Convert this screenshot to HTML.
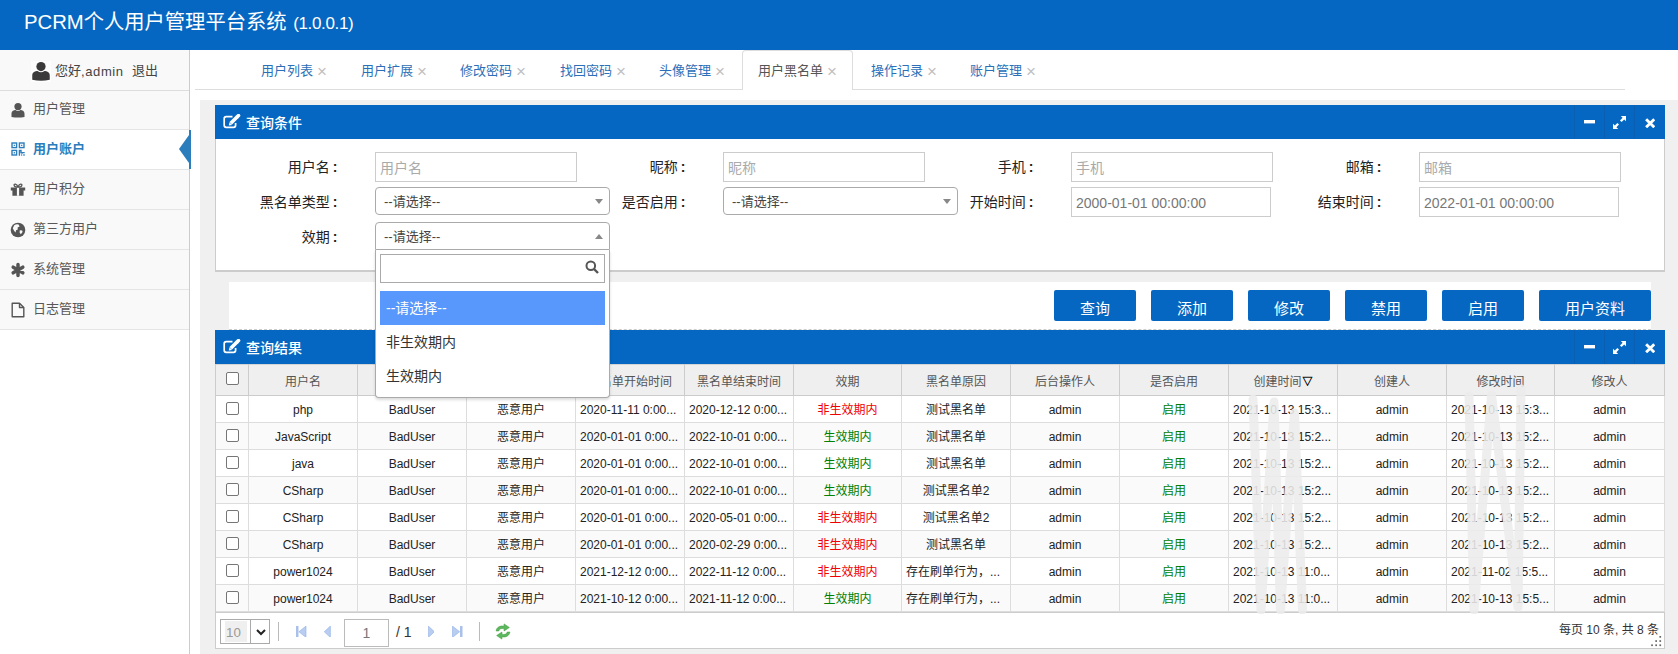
<!DOCTYPE html>
<html lang="zh-CN">
<head>
<meta charset="utf-8">
<title>PCRM个人用户管理平台系统</title>
<style>
*{box-sizing:border-box;margin:0;padding:0}
html,body{width:1678px;height:654px;overflow:hidden;background:#fff}
body{font-family:"Liberation Sans","Noto Sans CJK SC",sans-serif;font-size:13px;color:#333;position:relative}
.abs{position:absolute}
#hdr{position:absolute;left:0;top:0;width:1678px;height:50px;background:#0567c1}
#hdr .t{position:absolute;left:24px;top:7px;font-size:20.3px;color:#fff;line-height:30px;white-space:nowrap}
#side{position:absolute;left:0;top:50px;width:190px;height:604px;border-right:1px solid #ccc;background:#fff}
#side .user{height:40px;background:#f9f9f9;position:relative;font-size:13px;color:#444;line-height:40px}
#side .user span{position:absolute;top:1px;white-space:nowrap}
#side .mi{height:40px;background:#f9f9f9;border-bottom:1px solid #e5e5e5;position:relative;font-size:13px;color:#585858;line-height:38px;padding-left:33px}
#side .mi.on{background:#fff;color:#2b7dbc;font-weight:bold}
#side .mi svg{position:absolute;left:10px;top:12px}
#side .arrow{position:absolute;left:179px;top:84.500px;width:0;height:0;border-top:14px solid transparent;border-bottom:14px solid transparent;border-right:10px solid #2b7dbc}
#side .bar{position:absolute;left:189px;top:80px;width:2px;height:39px;background:#2b7dbc}
#tabs{position:absolute;left:190px;top:50px;width:1488px;height:50px;background:#fff}
#tabs .line{position:absolute;left:5px;top:39px;width:1430px;height:1px;background:#ddd}
#tabs .tb{position:absolute;top:0;height:40px;line-height:39px;font-size:13px;color:#2b6fb8;white-space:nowrap}
#tabs .tb i{font-style:normal;color:#c0c0c0;font-size:17px;margin-left:4px;position:relative;top:2px}
#tabs .act{position:absolute;left:552px;top:0;width:111px;height:40px;border:1px solid #ddd;border-bottom:0;border-radius:4px 4px 0 0;background:#fff}
#main{position:absolute;left:200px;top:100px;width:1478px;height:554px;background:#f0f0f0}
.ph{position:absolute;left:215px;width:1450px;height:34px;background:#0567c1;color:#fff;font-size:13px;line-height:34px}
.ph .tt{position:absolute;left:31px;top:1px;font-size:14px;font-weight:500;white-space:nowrap}
.ph .ic{position:absolute;top:0;width:30px;height:34px;border-left:1px solid #0a5fb2}
.ph svg{position:absolute}
#p1b{position:absolute;left:215px;top:139px;width:1450px;height:133px;background:#fff;border:1px solid #ccc;border-top:0;border-bottom:2px solid #ccc}
.lb{position:absolute;width:130px;text-align:right;font-size:14px;color:#222;line-height:20px;white-space:nowrap}
.in{position:absolute;height:30px;border:1px solid #ccc;background:#fff;font-size:14px;line-height:30px;padding-left:4px;color:#aaa;white-space:nowrap}
.in.v{color:#777}
.sel{position:absolute;height:28px;border:1px solid #aaa;border-radius:4px;background:#fff;font-size:13px;line-height:27px;padding-left:8px;color:#444;white-space:nowrap}
.sel b{position:absolute;right:6px;top:11px;width:0;height:0;border-left:4px solid transparent;border-right:4px solid transparent;border-top:5px solid #888}
.sel b.up{border-top:0;border-bottom:5px solid #888}
#dd{position:absolute;left:375px;top:250px;width:235px;height:148px;background:#fff;border:1px solid #aaa;border-top:0;border-radius:0 0 4px 4px;box-shadow:0 2px 3px rgba(0,0,0,.14)}
#dd .s{position:absolute;left:4px;top:4px;width:225px;height:29px;border:1px solid #aaa;background:#fff}
#dd .o{position:absolute;left:4px;width:225px;height:34px;line-height:35px;padding-left:6px;font-size:14px;color:#333;white-space:nowrap}
#dd .o.h{background:#5897fb;color:#fff}
#bb{position:absolute;left:229px;top:282px;width:1422px;height:48px;background:#fff;border-bottom:1px dashed #ccc}
.btn{position:absolute;top:290px;height:31px;background:#0567c1;color:#fff;font-size:15px;text-align:center;line-height:38px;white-space:nowrap;border-radius:2px}
#p2b{position:absolute;left:215px;top:364px;width:1450px;height:285px;background:#fff;border:1px solid #ccc;border-top:0}
#th{position:absolute;left:215px;top:364px;width:1450px;height:32px;background:#efefef;border-bottom:1px solid #ccc;border-left:1px solid #ccc;box-shadow:inset 0 1px 0 #d4d4d4}
.c{position:absolute;top:0;height:100%;border-right:1px solid #ddd;text-align:center;font-size:12px;white-space:nowrap;overflow:hidden}
#th .c{line-height:36px;color:#555;border-right:1px solid #ccc}
.r{position:absolute;left:216px;width:1449px;height:27px;border-bottom:1px solid #ddd;background:#fff}
.r.e{background:#fafafa}
.r .c{line-height:29px;color:#222}
.r .c.l{text-align:left;padding-left:4px}
.g{color:#008000!important}.rd{color:#f00000!important}
.cb{position:absolute;left:10px;width:13px;height:13px;border:1px solid #767676;border-radius:2px;background:#fff}
#pg{position:absolute;left:216px;top:612px;width:1448px;height:36px;background:#fff;border-top:1px solid #ccc}
.psel{position:absolute;left:4px;top:6px;width:50px;height:25px;border:1px solid #aaa;background:#fff}
.psel .n{position:absolute;left:4px;top:1px;width:22px;height:21px;background:#efefef;color:#999;font-size:13.300px;line-height:23px;padding-left:1px}
.psel .a{position:absolute;left:29px;top:0;width:20px;height:23px;border-left:1px solid #aaa}
.psel .a svg{position:absolute;left:4.500px;top:8.500px}
.sep{position:absolute;top:9px;width:1px;height:19px;background:#bbb}
.pin{position:absolute;left:128px;top:6px;width:45px;height:28px;border:1px solid #bbb;background:#fff;text-align:center;font-size:14px;line-height:26px;color:#777}
</style>
</head>
<body>
<div id="hdr"><div class="t">PCRM个人用户管理平台系统 <span style="font-size:17px;letter-spacing:-.35px;margin-left:1px">(1.0.0.1)</span></div></div>
<div id="side">
<div class="user"><div class="abs" style="left:31px;top:11px;width:20px;height:21px;background:#fdfdfd"></div><svg class="abs" style="left:31px;top:11px" width="20" height="20" viewBox="0 0 16 16"><circle cx="8" cy="4.4" r="3.7" fill="#3a3a3a"/><path d="M1 15 V11.5 C1 9 3.6 8 5.2 8 Q8 10 10.8 8 C12.4 8 15 9 15 11.5 V15 Q8 16.4 1 15Z" fill="#3a3a3a"/></svg><span style="left:55px">您好<span style="letter-spacing:.6px">,admin</span></span><span style="left:132px">退出</span></div>
<div class="mi"><svg width="16" height="16" viewBox="0 0 16 16"><circle cx="8" cy="4.6" r="3.6" fill="#555"/><path d="M1.5 15 V11.5 C1.5 9 4 8 5.5 8 Q8 9.8 10.5 8 C12 8 14.5 9 14.5 11.5 V15 Q8 16 1.5 15Z" fill="#555"/></svg>用户管理</div>
<div class="mi on"><svg width="16" height="16" viewBox="0 0 16 16" fill="none" stroke="#2b7dbc" stroke-width="1.400"><rect x="2" y="1" width="4.600" height="4.600"/><rect x="9.400" y="1" width="4.600" height="4.600"/><rect x="2" y="8.400" width="4.600" height="4.600"/><path d="M8.700 8.400h2.300v2.200h3.700M9.400 8.400v5.300M11.200 13h1M13.300 13h1.400M12 10.600v1.200" /><path d="M3.700 3.300h1.200M11.100 3.300h1.200M4.300 10v1.400" stroke-width="1.200"/></svg>用户账户</div>
<div class="mi"><svg width="16" height="16" viewBox="0 0 16 16" fill="#555"><path d="M.8 5.400h14.400v3.200H.8zM2.400 8.600h11.200v5.200H2.400z"/><path d="M8 5.200C6.800 1.200 3.400 1.600 4.200 3.600 4.600 4.800 6.500 5.200 8 5.200 9.500 5.200 11.400 4.800 11.800 3.600 12.600 1.600 9.200 1.200 8 5.200Z" fill="none" stroke="#555" stroke-width="1.300"/><rect x="6.900" y="5.800" width="2.200" height="8" fill="#f9f9f9"/></svg>用户积分</div>
<div class="mi"><svg width="16" height="16" viewBox="0 0 16 16"><circle cx="8" cy="8" r="7.300" fill="#555"/><path d="M4.200 3.200Q6.500 1.800 8.600 2.600L9.600 4.600 7.600 5.400 7.800 7.400 6 8.200 5.600 10.400 4.200 9 2.800 6.200Z M9.800 8.200L12.200 8.400 12.600 10 10.800 12.200 9.600 10.400Z" fill="#f9f9f9"/></svg>第三方用户</div>
<div class="mi"><svg width="16" height="16" viewBox="0 0 16 16" stroke="#555" stroke-width="3.500" stroke-linecap="round"><path d="M8 2.400v11.200M3.200 5.200l9.600 5.600M12.800 5.200L3.200 10.800"/></svg>系统管理</div>
<div class="mi"><svg width="16" height="16" viewBox="0 0 16 16" fill="none" stroke="#555" stroke-width="1.4" stroke-linejoin="round"><path d="M2.2 1.2h7.3l4.3 4.3v9.3H2.2z"/><path d="M9.5 1.2v4.3h4.3"/></svg>日志管理</div>
<div class="abs" style="left:0;top:40px;width:189px;height:1px;background:#ddd"></div><div class="bar"></div><div class="arrow"></div>
</div>
<div id="tabs"><div class="line"></div><div class="act"></div>
<div class="tb" style="left:71px;">用户列表<i>×</i></div>
<div class="tb" style="left:171px;">用户扩展<i>×</i></div>
<div class="tb" style="left:270px;">修改密码<i>×</i></div>
<div class="tb" style="left:370px;">找回密码<i>×</i></div>
<div class="tb" style="left:469px;">头像管理<i>×</i></div>
<div class="tb" style="left:568px;color:#555;">用户黑名单<i>×</i></div>
<div class="tb" style="left:681px;">操作记录<i>×</i></div>
<div class="tb" style="left:780px;">账户管理<i>×</i></div>
</div>
<div id="main"></div>
<div class="ph" style="top:105px"><svg style="left:8px;top:9px" width="18" height="15" viewBox="0 0 18 15" fill="none" stroke="#fff"><path d="M12.600 9v2.300a2 2 0 0 1-2 2H3.200a2 2 0 0 1-2-2V4.700a2 2 0 0 1 2-2h6.300" stroke-width="1.700"/><path d="M7.800 9.300L14.300 2.800" stroke-width="3.600"/><path d="M5.800 11.600l.7-3.300 2.600 2.600z" fill="#fff" stroke="none"/><path d="M14.300 2.800l1.200-1.200" stroke-width="3.600" stroke-linecap="round"/></svg><div class="tt">查询条件</div><div class="ic" style="left:1359px"><svg style="left:9px;top:15px" width="11" height="4"><rect width="11" height="3.4" fill="#fff"/></svg></div><div class="ic" style="left:1389px"><svg style="left:8px;top:11px" width="13" height="13" viewBox="0 0 13 13" fill="#fff"><path d="M13 0v5.2L11.2 3.4 8.6 6 7 4.4 9.6 1.8 7.8 0zM0 13V7.8l1.8 1.8L4.4 7 6 8.600 3.4 11.2 5.2 13z"/></svg></div><div class="ic" style="left:1419px"><svg style="left:9.500px;top:12.500px" width="10.400" height="10.400" viewBox="0 0 11 11" stroke="#fff" stroke-width="3"><path d="M1.2 1.2l8.6 8.6M9.800 1.2L1.2 9.800"/></svg></div></div>
<div id="p1b"></div>
<div class="lb" style="left:207.5px;top:157px">用户名<span style="margin-left:3px;font-weight:bold">:</span></div>
<div class="lb" style="left:555.5px;top:157px">昵称<span style="margin-left:3px;font-weight:bold">:</span></div>
<div class="lb" style="left:903.5px;top:157px">手机<span style="margin-left:3px;font-weight:bold">:</span></div>
<div class="lb" style="left:1251.5px;top:157px">邮箱<span style="margin-left:3px;font-weight:bold">:</span></div>
<div class="lb" style="left:207.5px;top:192px">黑名单类型<span style="margin-left:3px;font-weight:bold">:</span></div>
<div class="lb" style="left:555.5px;top:192px">是否启用<span style="margin-left:3px;font-weight:bold">:</span></div>
<div class="lb" style="left:903.5px;top:192px">开始时间<span style="margin-left:3px;font-weight:bold">:</span></div>
<div class="lb" style="left:1251.5px;top:192px">结束时间<span style="margin-left:3px;font-weight:bold">:</span></div>
<div class="lb" style="left:207.5px;top:227px">效期<span style="margin-left:3px;font-weight:bold">:</span></div>
<div class="in" style="left:375px;top:152px;width:202px">用户名</div>
<div class="in" style="left:723px;top:152px;width:202px">昵称</div>
<div class="in" style="left:1071px;top:152px;width:202px">手机</div>
<div class="in" style="left:1419px;top:152px;width:202px">邮箱</div>
<div class="sel" style="left:375px;top:187px;width:235px">--请选择--<b></b></div>
<div class="sel" style="left:723px;top:187px;width:235px">--请选择--<b></b></div>
<div class="in v" style="left:1071px;top:187px;width:200px">2000-01-01 00:00:00</div>
<div class="in v" style="left:1419px;top:187px;width:200px">2022-01-01 00:00:00</div>
<div class="sel" style="left:375px;top:222px;width:235px;border-radius:4px 4px 0 0">--请选择--<b class="up"></b></div>
<div id="bb"></div>
<div class="btn" style="left:1054px;width:82px">查询</div>
<div class="btn" style="left:1151px;width:82px">添加</div>
<div class="btn" style="left:1248px;width:82px">修改</div>
<div class="btn" style="left:1345px;width:82px">禁用</div>
<div class="btn" style="left:1442px;width:82px">启用</div>
<div class="btn" style="left:1539px;width:112px">用户资料</div>
<div class="ph" style="top:330px"><svg style="left:8px;top:9px" width="18" height="15" viewBox="0 0 18 15" fill="none" stroke="#fff"><path d="M12.600 9v2.300a2 2 0 0 1-2 2H3.200a2 2 0 0 1-2-2V4.700a2 2 0 0 1 2-2h6.300" stroke-width="1.700"/><path d="M7.800 9.300L14.300 2.800" stroke-width="3.600"/><path d="M5.800 11.600l.7-3.300 2.600 2.600z" fill="#fff" stroke="none"/><path d="M14.300 2.800l1.200-1.200" stroke-width="3.600" stroke-linecap="round"/></svg><div class="tt">查询结果</div><div class="ic" style="left:1359px"><svg style="left:9px;top:15px" width="11" height="4"><rect width="11" height="3.4" fill="#fff"/></svg></div><div class="ic" style="left:1389px"><svg style="left:8px;top:11px" width="13" height="13" viewBox="0 0 13 13" fill="#fff"><path d="M13 0v5.2L11.2 3.4 8.6 6 7 4.4 9.6 1.8 7.8 0zM0 13V7.8l1.8 1.8L4.4 7 6 8.600 3.4 11.2 5.2 13z"/></svg></div><div class="ic" style="left:1419px"><svg style="left:9.500px;top:12.500px" width="10.400" height="10.400" viewBox="0 0 11 11" stroke="#fff" stroke-width="3"><path d="M1.2 1.2l8.6 8.6M9.800 1.2L1.2 9.800"/></svg></div></div>
<div id="p2b"></div>
<div id="th"><div class="c" style="left:0px;width:33px"><span class="cb" style="top:8px"></span></div><div class="c" style="left:33px;width:109px">用户名</div><div class="c" style="left:142px;width:109px">黑名单类型</div><div class="c" style="left:251px;width:109px">类型名称</div><div class="c" style="left:360px;width:109px">黑名单开始时间</div><div class="c" style="left:469px;width:109px">黑名单结束时间</div><div class="c" style="left:578px;width:108px">效期</div><div class="c" style="left:686px;width:109px">黑名单原因</div><div class="c" style="left:795px;width:109px">后台操作人</div><div class="c" style="left:904px;width:109px">是否启用</div><div class="c" style="left:1013px;width:109px">创建时间<span style="font-size:10px;color:#111;-webkit-text-stroke:.4px #111;position:relative;top:-1px;margin-left:1px">▽</span></div><div class="c" style="left:1122px;width:109px">创建人</div><div class="c" style="left:1231px;width:108px">修改时间</div><div class="c" style="left:1339px;width:110px">修改人</div></div>
<div class="r" style="top:396px"><div class="c" style="left:0px;width:33px"><span class="cb" style="top:6px"></span></div><div class="c" style="left:33px;width:109px">php</div><div class="c" style="left:142px;width:109px">BadUser</div><div class="c" style="left:251px;width:109px">恶意用户</div><div class="c l" style="left:360px;width:109px">2020-11-11 0:00...</div><div class="c l" style="left:469px;width:109px">2020-12-12 0:00...</div><div class="c rd" style="left:578px;width:108px">非生效期内</div><div class="c" style="left:686px;width:109px">测试黑名单</div><div class="c" style="left:795px;width:109px">admin</div><div class="c g" style="left:904px;width:109px">启用</div><div class="c l" style="left:1013px;width:109px">2021-10-13 15:3...</div><div class="c" style="left:1122px;width:109px">admin</div><div class="c l" style="left:1231px;width:108px">2021-10-13 15:3...</div><div class="c" style="left:1339px;width:110px">admin</div></div>
<div class="r e" style="top:423px"><div class="c" style="left:0px;width:33px"><span class="cb" style="top:6px"></span></div><div class="c" style="left:33px;width:109px">JavaScript</div><div class="c" style="left:142px;width:109px">BadUser</div><div class="c" style="left:251px;width:109px">恶意用户</div><div class="c l" style="left:360px;width:109px">2020-01-01 0:00...</div><div class="c l" style="left:469px;width:109px">2022-10-01 0:00...</div><div class="c g" style="left:578px;width:108px">生效期内</div><div class="c" style="left:686px;width:109px">测试黑名单</div><div class="c" style="left:795px;width:109px">admin</div><div class="c g" style="left:904px;width:109px">启用</div><div class="c l" style="left:1013px;width:109px">2021-10-13 15:2...</div><div class="c" style="left:1122px;width:109px">admin</div><div class="c l" style="left:1231px;width:108px">2021-10-13 15:2...</div><div class="c" style="left:1339px;width:110px">admin</div></div>
<div class="r" style="top:450px"><div class="c" style="left:0px;width:33px"><span class="cb" style="top:6px"></span></div><div class="c" style="left:33px;width:109px">java</div><div class="c" style="left:142px;width:109px">BadUser</div><div class="c" style="left:251px;width:109px">恶意用户</div><div class="c l" style="left:360px;width:109px">2020-01-01 0:00...</div><div class="c l" style="left:469px;width:109px">2022-10-01 0:00...</div><div class="c g" style="left:578px;width:108px">生效期内</div><div class="c" style="left:686px;width:109px">测试黑名单</div><div class="c" style="left:795px;width:109px">admin</div><div class="c g" style="left:904px;width:109px">启用</div><div class="c l" style="left:1013px;width:109px">2021-10-13 15:2...</div><div class="c" style="left:1122px;width:109px">admin</div><div class="c l" style="left:1231px;width:108px">2021-10-13 15:2...</div><div class="c" style="left:1339px;width:110px">admin</div></div>
<div class="r e" style="top:477px"><div class="c" style="left:0px;width:33px"><span class="cb" style="top:6px"></span></div><div class="c" style="left:33px;width:109px">CSharp</div><div class="c" style="left:142px;width:109px">BadUser</div><div class="c" style="left:251px;width:109px">恶意用户</div><div class="c l" style="left:360px;width:109px">2020-01-01 0:00...</div><div class="c l" style="left:469px;width:109px">2022-10-01 0:00...</div><div class="c g" style="left:578px;width:108px">生效期内</div><div class="c" style="left:686px;width:109px">测试黑名单2</div><div class="c" style="left:795px;width:109px">admin</div><div class="c g" style="left:904px;width:109px">启用</div><div class="c l" style="left:1013px;width:109px">2021-10-13 15:2...</div><div class="c" style="left:1122px;width:109px">admin</div><div class="c l" style="left:1231px;width:108px">2021-10-13 15:2...</div><div class="c" style="left:1339px;width:110px">admin</div></div>
<div class="r" style="top:504px"><div class="c" style="left:0px;width:33px"><span class="cb" style="top:6px"></span></div><div class="c" style="left:33px;width:109px">CSharp</div><div class="c" style="left:142px;width:109px">BadUser</div><div class="c" style="left:251px;width:109px">恶意用户</div><div class="c l" style="left:360px;width:109px">2020-01-01 0:00...</div><div class="c l" style="left:469px;width:109px">2020-05-01 0:00...</div><div class="c rd" style="left:578px;width:108px">非生效期内</div><div class="c" style="left:686px;width:109px">测试黑名单2</div><div class="c" style="left:795px;width:109px">admin</div><div class="c g" style="left:904px;width:109px">启用</div><div class="c l" style="left:1013px;width:109px">2021-10-13 15:2...</div><div class="c" style="left:1122px;width:109px">admin</div><div class="c l" style="left:1231px;width:108px">2021-10-13 15:2...</div><div class="c" style="left:1339px;width:110px">admin</div></div>
<div class="r e" style="top:531px"><div class="c" style="left:0px;width:33px"><span class="cb" style="top:6px"></span></div><div class="c" style="left:33px;width:109px">CSharp</div><div class="c" style="left:142px;width:109px">BadUser</div><div class="c" style="left:251px;width:109px">恶意用户</div><div class="c l" style="left:360px;width:109px">2020-01-01 0:00...</div><div class="c l" style="left:469px;width:109px">2020-02-29 0:00...</div><div class="c rd" style="left:578px;width:108px">非生效期内</div><div class="c" style="left:686px;width:109px">测试黑名单</div><div class="c" style="left:795px;width:109px">admin</div><div class="c g" style="left:904px;width:109px">启用</div><div class="c l" style="left:1013px;width:109px">2021-10-13 15:2...</div><div class="c" style="left:1122px;width:109px">admin</div><div class="c l" style="left:1231px;width:108px">2021-10-13 15:2...</div><div class="c" style="left:1339px;width:110px">admin</div></div>
<div class="r" style="top:558px"><div class="c" style="left:0px;width:33px"><span class="cb" style="top:6px"></span></div><div class="c" style="left:33px;width:109px">power1024</div><div class="c" style="left:142px;width:109px">BadUser</div><div class="c" style="left:251px;width:109px">恶意用户</div><div class="c l" style="left:360px;width:109px">2021-12-12 0:00...</div><div class="c l" style="left:469px;width:109px">2022-11-12 0:00...</div><div class="c rd" style="left:578px;width:108px">非生效期内</div><div class="c l" style="left:686px;width:109px">存在刷单行为，...</div><div class="c" style="left:795px;width:109px">admin</div><div class="c g" style="left:904px;width:109px">启用</div><div class="c l" style="left:1013px;width:109px">2021-10-13 11:0...</div><div class="c" style="left:1122px;width:109px">admin</div><div class="c l" style="left:1231px;width:108px">2021-11-02 15:5...</div><div class="c" style="left:1339px;width:110px">admin</div></div>
<div class="r e" style="top:585px"><div class="c" style="left:0px;width:33px"><span class="cb" style="top:6px"></span></div><div class="c" style="left:33px;width:109px">power1024</div><div class="c" style="left:142px;width:109px">BadUser</div><div class="c" style="left:251px;width:109px">恶意用户</div><div class="c l" style="left:360px;width:109px">2021-10-12 0:00...</div><div class="c l" style="left:469px;width:109px">2021-11-12 0:00...</div><div class="c g" style="left:578px;width:108px">生效期内</div><div class="c l" style="left:686px;width:109px">存在刷单行为，...</div><div class="c" style="left:795px;width:109px">admin</div><div class="c g" style="left:904px;width:109px">启用</div><div class="c l" style="left:1013px;width:109px">2021-10-13 11:0...</div><div class="c" style="left:1122px;width:109px">admin</div><div class="c l" style="left:1231px;width:108px">2021-10-13 15:5...</div><div class="c" style="left:1339px;width:110px">admin</div></div>
<div id="pg"><div class="psel"><span class="n">10</span><span class="a"><svg width="10" height="7" viewBox="0 0 10 7" fill="none" stroke="#222" stroke-width="2"><path d="M1 1l4 4 4-4"/></svg></span></div><div class="sep" style="left:62px"></div><svg class="abs" style="left:80px;top:12.500px" width="10.500" height="11.500" viewBox="0 0 11 12"><rect x="0" y="0" width="2.600" height="12" fill="#a9c0ea"/><path d="M10.500 0v12L3 6z" fill="#b9cdf0" stroke="#8eaee6" stroke-width=".6"/></svg><svg class="abs" style="left:108px;top:12.500px" width="6.700" height="11.500" viewBox="0 0 7 12"><path d="M6.700 0v12L.3 6z" fill="#b9cdf0" stroke="#8eaee6" stroke-width=".6"/></svg><div class="pin">1</div><div class="abs" style="left:180px;top:9px;font-size:14px;color:#333;line-height:20px">/ 1</div><svg class="abs" style="left:211.500px;top:12.500px" width="6.700" height="11.500" viewBox="0 0 7 12"><path d="M.3 0v12L6.700 6z" fill="#b9cdf0" stroke="#8eaee6" stroke-width=".6"/></svg><svg class="abs" style="left:236px;top:12.500px" width="10.500" height="11.500" viewBox="0 0 11 12"><rect x="8.400" y="0" width="2.600" height="12" fill="#a9c0ea"/><path d="M.5 0v12L8 6z" fill="#b9cdf0" stroke="#8eaee6" stroke-width=".6"/></svg><div class="sep" style="left:263px"></div><svg class="abs" style="left:277.500px;top:10px" width="18" height="17" viewBox="0 0 17 16" fill="#5cb85c" stroke="#3d9a3d" stroke-width=".5"><path d="M2 7.500C2.500 3.800 6 2.200 9.500 3V.8L14.500 4.200 9.500 7.500V5.400C7 4.800 5 5.500 4.500 7.500z"/><path d="M15 8.500C14.500 12.200 11 13.800 7.500 13v2.200L2.500 11.800 7.500 8.500v2.100c2.500.6 4.500-.1 5-2.100z"/></svg><div class="abs" style="right:5px;top:7px;font-size:12px;color:#333;line-height:20px;white-space:nowrap">每页 10 条, 共 8 条</div><svg class="abs" style="left:1435px;top:23px" width="11" height="11" viewBox="0 0 11 11" fill="#666"><rect x="8.400" y="0" width="1.700" height="1.700"/><rect x="4.300" y="4.200" width="1.700" height="1.700"/><rect x="8.400" y="4.200" width="1.700" height="1.700"/><rect x=".2" y="8.400" width="1.700" height="1.700"/><rect x="4.300" y="8.400" width="1.700" height="1.700"/><rect x="8.400" y="8.400" width="1.700" height="1.700"/></svg></div>
<svg class="abs" style="left:1228px;top:380px" width="330" height="234" viewBox="1228 380 330 234" fill="none" stroke="#ececec" stroke-opacity=".88" stroke-width="9" stroke-linecap="round" stroke-linejoin="round"><path d="M1253 399L1261 610L1274 402L1280.500 610L1294.500 413L1302.500 610"/><path d="M1469 396L1474 610L1491.500 395L1518 607L1521 389"/></svg>
<div id="dd"><div class="s"><svg style="position:absolute;right:5px;top:5px" width="14" height="14" viewBox="0 0 14 14" fill="none" stroke="#555" stroke-width="2"><circle cx="5.800" cy="5.800" r="4.300"/><path d="M9 9l4 4" stroke-width="2.400"/></svg></div><div class="o h" style="top:41px">--请选择--</div><div class="o" style="top:75px">非生效期内</div><div class="o" style="top:109px">生效期内</div></div>
</body>
</html>
